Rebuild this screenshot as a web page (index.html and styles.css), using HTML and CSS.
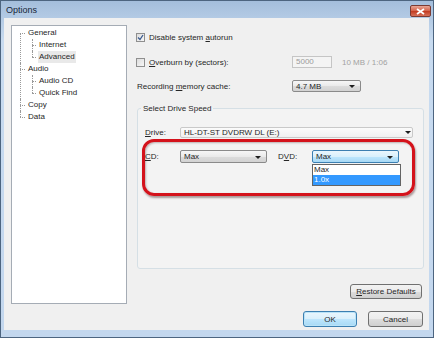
FILE: index.html
```html
<!DOCTYPE html>
<html lang="en">
<head>
    <meta charset="UTF-8">
    <title>Options</title>
    <link rel="stylesheet" href="styles.css">
</head>
<body>
    <div class="window">
        <div class="titlebar">
            <span class="title">Options</span>
            <span class="close">
                <svg width="9" height="7" viewBox="0 0 9 7"><path d="M1 1 L8 6 M8 1 L1 6" stroke="#fff" stroke-width="1.8" fill="none"/></svg>
            </span>
        </div>

        <div class="client">
            <ul class="tree">
                <li><span class="node">General</span>
                    <ul>
                        <li><span class="node">Internet</span></li>
                        <li><span class="node selected">Advanced</span></li>
                    </ul>
                </li>
                <li><span class="node">Audio</span>
                    <ul>
                        <li><span class="node">Audio CD</span></li>
                        <li><span class="node">Quick Find</span></li>
                    </ul>
                </li>
                <li><span class="node">Copy</span></li>
                <li><span class="node">Data</span></li>
            </ul>

            <div class="settings">
                <div class="row row-autorun">
                    <span class="checkbox">
                        <svg width="7" height="7" viewBox="0 0 7 7"><path d="M1 3.5 L3 5.5 L6 1" stroke="#3b5b8f" stroke-width="1.3" fill="none"/></svg>
                    </span>
                    <span>Disable system <u>a</u>utorun</span>
                </div>

                <div class="row row-overburn">
                    <span class="row-label"><span class="checkbox"></span><span><u>O</u>verburn by (sectors):</span></span>
                    <span class="textbox">5000</span>
                    <span class="hint">10 MB / 1:06</span>
                </div>

                <div class="row row-cache">
                    <span class="row-label"><span>Recording <u>m</u>emory cache:</span></span>
                    <span class="combo combo-cache">4.7 MB<span class="arrow"></span></span>
                </div>

                <fieldset class="group">
                    <legend>Select Drive Speed</legend>
                    <div class="drive-row">
                        <span class="field-label"><u>D</u>rive:</span>
                        <span class="combo combo-drive">HL-DT-ST DVDRW DL (E:)<span class="arrow"></span></span>
                    </div>
                    <div class="speed-row">
                        <span class="field-label"><u>C</u>D:</span>
                        <span class="combo combo-speed">Max<span class="arrow"></span></span>
                        <span class="field-label dvd-label">D<u>V</u>D:</span>
                        <div class="combo-wrap">
                            <span class="combo combo-speed focused">Max<span class="arrow"></span></span>
                            <ul class="droplist">
                                <li>Max</li>
                                <li class="highlight">1.0x</li>
                            </ul>
                        </div>
                        <div class="annotation"></div>
                    </div>
                </fieldset>

                <button class="btn restore"><u>R</u>estore Defaults</button>
            </div>

            <div class="actions">
                <button class="btn btn-default ok">OK</button>
                <button class="btn cancel">Cancel</button>
            </div>
        </div>
    </div>
</body>
</html>
```

FILE: styles.css
```css
* {
    box-sizing: border-box;
}
body {
    margin: 0;
    background: #ffffff;
    font-family: "Liberation Sans", Arial, sans-serif;
    font-size: 8px;
    color: #262626;
}
.window {
    width: 434px;
    height: 338px;
    border: 1px solid #4d6580;
    padding: 0 4px 7px 3px;
    background: linear-gradient(#a4bedc, #c8dbf0 40px, #c3d7ee);
    display: flex;
    flex-direction: column;
}
.titlebar {
    height: 17px;
    flex: none;
    display: flex;
    align-items: center;
    position: relative;
}
.title {
    font-size: 9px;
    color: #17263a;
    margin-left: 2px;
    margin-top: 1px;
}
.close {
    position: absolute;
    right: -2px;
    top: 4px;
    width: 21px;
    height: 12px;
    border: 1px solid #7a3b33;
    border-radius: 2px;
    background: linear-gradient(#e8a696, #d6674f 45%, #c33e24 55%, #d7725a);
    display: flex;
    align-items: center;
    justify-content: center;
}
.client {
    flex: 1;
    background: #f0f0f0;
    display: grid;
    grid-template-columns: 116px 1fr;
    grid-template-rows: 279px 16px;
    column-gap: 9px;
    row-gap: 7px;
    padding: 7px 5px 3px 7px;
}

/* tree */
.tree {
    list-style: none;
    margin: 0;
    padding: 1px 0 0 0;
    background: #ffffff;
    border: 1px solid #a5acb5;
}
.tree ul {
    list-style: none;
    margin: 0;
    padding: 0;
}
.tree li {
    position: relative;
    padding-left: 15px;
}
.tree li::before {
    content: "";
    position: absolute;
    left: 8px;
    top: 6px;
    width: 5px;
    border-top: 1px dotted #9a9a9a;
}
.tree li::after {
    content: "";
    position: absolute;
    left: 8px;
    top: 0;
    bottom: 0;
    border-left: 1px dotted #9a9a9a;
}
.tree > li:first-child::after {
    top: 6px;
}
.tree li:last-child::after {
    bottom: auto;
    height: 6px;
}
.tree ul li {
    padding-left: 11px;
}
.tree ul li::before {
    left: 5px;
    width: 4px;
}
.tree ul li::after {
    left: 5px;
}
.node {
    display: inline-block;
    height: 12px;
    line-height: 12px;
    padding: 0 1px;
}
.node.selected {
    background: #e9e9e9;
}

/* right side */
.settings {
    display: flex;
    flex-direction: column;
}
.row {
    display: flex;
    align-items: center;
}
.row-autorun {
    margin-top: 6px;
    height: 13px;
}
.row-overburn {
    margin-top: 12px;
    height: 12px;
}
.row-cache {
    margin-top: 12px;
    height: 12px;
}
.row-label {
    width: 156px;
    display: flex;
    align-items: center;
}
.row-cache .row-label {
    padding-left: 1px;
}
.checkbox {
    width: 9px;
    height: 9px;
    border: 1px solid #8f8f8f;
    background: linear-gradient(135deg, #dcdcdc, #f7f7f7);
    margin-right: 4px;
    display: flex;
    align-items: center;
    justify-content: center;
    flex: none;
}
.textbox {
    width: 40px;
    height: 12px;
    border: 1px solid #c5c5c5;
    background: #f4f4f4;
    color: #9b9b9b;
    padding-left: 3px;
    line-height: 10px;
}
.hint {
    margin-left: 10px;
    color: #a2a2a2;
}
.combo {
    position: relative;
    display: flex;
    align-items: center;
    height: 12px;
    padding-left: 3px;
    border: 1px solid #8a8a8a;
    border-radius: 2px;
    background: linear-gradient(#f6f6f6, #eaeaea 50%, #dcdcdc 51%, #d2d2d2);
    color: #262626;
}
.combo .arrow {
    position: absolute;
    right: 5px;
    top: 4px;
    border-left: 3px solid transparent;
    border-right: 3px solid transparent;
    border-top: 3px solid #1e1e1e;
}
.combo-cache {
    width: 69px;
}
.combo-drive {
    flex: 1;
    height: 11px;
    border-color: #c9c9c9;
    background: linear-gradient(#fbfbfb, #f0f0f0);
}
.combo-drive .arrow {
    right: 1px;
    top: 3px;
}
.combo-speed {
    width: 87px;
    height: 13px;
}
.combo-speed .arrow {
    top: 5px;
}
.combo.focused {
    border-color: #3c7fb1;
    background: linear-gradient(#eaf6fd, #d9f0fc 50%, #bee6fd 51%, #a7d9f5);
}

/* group */
.group {
    margin: 11px 0 0 1px;
    height: 166px;
    border: 1px solid #d5dfe5;
    border-radius: 3px;
    padding: 13px 10px 0 7px;
    background: #f3f3f3;
}
.group legend {
    margin-left: -4px;
    padding: 0 2px;
    line-height: 11px;
}
.drive-row {
    display: flex;
    align-items: center;
    height: 11px;
}
.field-label {
    width: 35px;
}
.speed-row {
    position: relative;
    margin-top: 12px;
    display: flex;
    align-items: center;
    height: 13px;
}
.dvd-label {
    width: 34px;
    margin-left: 11px;
}
.combo-wrap {
    position: relative;
}
.droplist {
    position: absolute;
    left: 0;
    top: 14px;
    width: 89px;
    margin: 0;
    padding: 0;
    list-style: none;
    background: #ffffff;
    border: 1px solid #646464;
    z-index: 2;
}
.droplist li {
    height: 10px;
    line-height: 10px;
    padding-left: 1px;
}
.droplist li.highlight {
    background: #3399ff;
    color: #ffffff;
}
.annotation {
    position: absolute;
    left: -3px;
    top: -11px;
    width: 273px;
    height: 57px;
    border: 3px solid #d4121b;
    border-radius: 12px;
    box-shadow: 1px 2px 2px rgba(60, 20, 20, 0.4), inset 1px 1px 2px rgba(60, 20, 20, 0.3);
    z-index: 3;
}

/* buttons */
.btn {
    font-family: inherit;
    font-size: 8px;
    color: #262626;
    height: 16px;
    padding: 0;
    border: 1px solid #707070;
    border-radius: 3px;
    background: linear-gradient(#f2f2f2, #ebebeb 50%, #dddddd 51%, #cfcfcf);
}
.restore {
    align-self: flex-end;
    width: 72px;
    height: 15px;
    margin-top: 15px;
    margin-right: 2px;
}
.actions {
    grid-column: 1 / 3;
    display: flex;
    justify-content: flex-end;
    gap: 11px;
    padding-right: 1px;
}
.ok {
    width: 54px;
}
.cancel {
    width: 55px;
}
.btn-default {
    border-color: #3c7fb1;
    background: linear-gradient(#eaf6fd, #d9f0fc 50%, #bee6fd 51%, #a7d9f5);
    box-shadow: inset 0 0 0 1px #b9e3f8;
}
```
